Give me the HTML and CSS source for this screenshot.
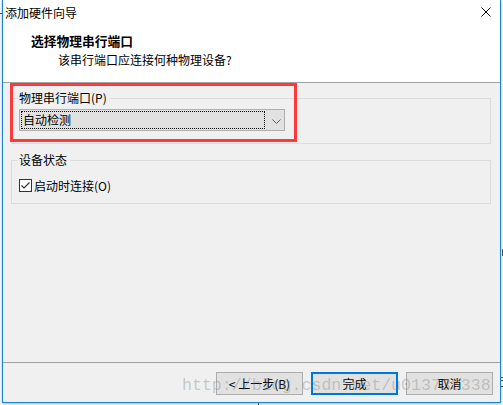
FILE: index.html
```html
<!DOCTYPE html>
<html lang="zh-CN">
<head>
<meta charset="utf-8">
<title>添加硬件向导</title>
<link rel="stylesheet" href="styles.css">
</head>
<body>
<div class="screen">
  <span class="mark mark-left"></span>
  <span class="mark mark-r1"></span>
  <span class="mark mark-r2"></span>
  <span class="mark mark-r3"></span>
  <span class="mark mark-r4"></span>
  <span class="mark mark-bottom"></span>
  <div class="dialog">
    <div class="titlebar">
      <span class="title">添加硬件向导</span>
      <svg class="close" width="10" height="10" viewBox="0 0 10 10"><path d="M0.5 0.5 L9.5 9.5 M9.5 0.5 L0.5 9.5" stroke="#000" stroke-width="1" fill="none"/></svg>
    </div>
    <div class="header">
      <div class="h-title">选择物理串行端口</div>
      <div class="h-sub">该串行端口应连接何种物理设备?</div>
    </div>
    <div class="content">
      <fieldset class="group group-port">
        <legend>物理串行端口(P)</legend>
        <div class="select">
          <span class="focus">自动检测</span>
          <svg class="chev" width="9" height="5" viewBox="0 0 9 5"><path d="M0.5 0.5 L4.5 4.5 L8.5 0.5" stroke="#606060" stroke-width="1" fill="none"/></svg>
        </div>
      </fieldset>
      <fieldset class="group group-state">
        <legend>设备状态</legend>
        <label class="check">
          <svg class="box" width="13" height="13" viewBox="0 0 13 13"><rect x="0.5" y="0.5" width="12" height="12" fill="#fff" stroke="#333"/><path d="M2.5 6.5 L5 9 L10.5 3.5" stroke="#333" stroke-width="1.2" fill="none"/></svg>
          <span>启动时连接(O)</span>
        </label>
      </fieldset>
    </div>
    <div class="footer">
      <button class="btn">&lt; 上一步(B)</button>
      <button class="btn btn-default">完成</button>
      <button class="btn">取消</button>
    </div>
    <div class="annot"></div>
    <div class="watermark">http://blog.csdn.net/u013738338</div>
  </div>
</div>
</body>
</html>
```
FILE: styles.css
```css
* { box-sizing: border-box; }
html, body { margin: 0; padding: 0; background: #fff; }
body {
  font-family: "Noto Sans CJK SC", "Noto Sans", sans-serif;
  font-size: 12px;
  color: #000;
}
.screen {
  position: relative;
  width: 503px;
  height: 405px;
  overflow: hidden;
  background: #fff;
}
.mark { position: absolute; background: #555; }
.mark-left { left: 0; top: 13px; width: 2px; height: 1px; }
.mark-r1 { left: 502px; top: 249px; width: 1px; height: 7px; }
.mark-r2 { left: 501px; top: 377px; width: 2px; height: 1px; }
.mark-r3 { left: 501px; top: 380px; width: 2px; height: 1px; }
.mark-r4 { left: 501px; top: 386px; width: 2px; height: 1px; }
.mark-bottom { left: 258px; top: 403px; width: 1px; height: 2px; }

.dialog {
  position: relative;
  margin-left: 2px;
  width: 499px;
  height: 403px;
  border-left: 1px solid #1883d7;
  border-right: 1px solid #1883d7;
  border-bottom: 1px solid #1883d7;
  display: flex;
  flex-direction: column;
  box-shadow: 0 1px 3px rgba(0,0,0,0.3);
  background: #f0f0f0;
}
.titlebar {
  height: 30px;
  background: #fff;
  display: flex;
  align-items: flex-start;
  padding: 5px 9px 0 2px;
  line-height: 16px;
}
.title { flex: 1; }
.close { margin-top: 2px; }
.header {
  height: 53px;
  background: #fff;
  border-bottom: 1px solid #a0a0a0;
  padding-top: 3px;
  line-height: 16px;
}
.h-title {
  padding-left: 28px;
  font-weight: bold;
  font-size: 12.75px;
}
.h-sub {
  margin-top: 3px;
  padding-left: 55px;
}
.content {
  flex: 1;
  padding-top: 7px;
  background: #f0f0f0;
}
.group {
  margin: 0 0 0 8px;
  width: 480px;
  min-width: 0;
  border: 1px solid #dcdcdc;
  padding: 3px 7px 12px 7px;
}
.group legend {
  margin-left: -1px;
  padding: 0 3px 0 1px;
  line-height: 16px;
  font-size: 12px;
}
.group-state {
  margin-top: 8px;
  padding-top: 10px;
  padding-bottom: 10px;
}
.select {
  width: 266px;
  height: 22px;
  border: 1px solid #adadad;
  background: #e1e1e1;
  display: flex;
  align-items: flex-start;
  padding: 1px;
}
.focus {
  width: 244px;
  height: 18px;
  border: 1px dotted #000;
  line-height: 16px;
  padding-left: 1px;
}
.chev { margin: 8px 0 0 7px; }
.check {
  display: flex;
  align-items: center;
  height: 15px;
  line-height: 16px;
  gap: 2px;
}
.footer {
  height: 40px;
  border-top: 1px solid #a0a0a0;
  padding: 9px 7px 0 0;
  display: flex;
  justify-content: flex-end;
  align-items: flex-start;
  gap: 8px;
  background: #f0f0f0;
}
.btn {
  width: 87px;
  height: 23px;
  border: 1px solid #adadad;
  background: #e1e1e1;
  font-family: inherit;
  font-size: 12px;
  line-height: 16px;
  color: #000;
  padding: 0;
  margin: 0;
}
.btn-default { border: 2px solid #0078d7; }
.annot {
  position: absolute;
  left: 7px;
  top: 83px;
  width: 287px;
  height: 59px;
  border: 3px solid #fc3a3a;
}
.watermark {
  position: absolute;
  left: 179px;
  top: 376px;
  font-family: "Liberation Mono", monospace;
  font-size: 16.6px;
  color: rgba(130,130,130,0.38);
  white-space: nowrap;
  pointer-events: none;
}
```
